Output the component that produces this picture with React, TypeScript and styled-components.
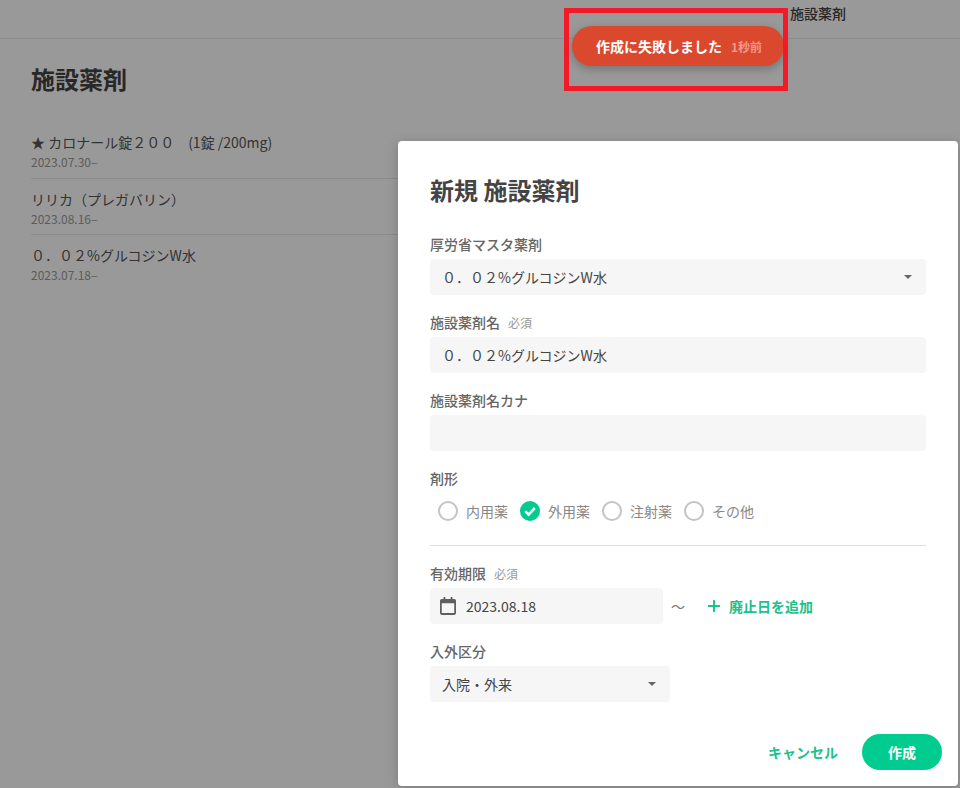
import React from "react";
import styled, { createGlobalStyle } from "styled-components";
import { Plus } from "lucide-react";

const Global = createGlobalStyle`
  html, body { margin: 0; padding: 0; background: #fff; }
  body { font-family: "Noto Sans CJK JP", "Noto Sans", sans-serif; color: #333; }
  * { box-sizing: border-box; }
`;

const Page = styled.div`
  position: relative;
  width: 960px;
  height: 788px;
  overflow: hidden;
  background: #fff;
`;
const Header = styled.header`
  height: 39px;
  border-bottom: 1px solid #ececec;
  display: flex;
  justify-content: flex-end;
  padding: 3px 114px 0 0;
  font-size: 14px;
  line-height: 20px;
  font-weight: 500;
  color: #444;
`;
const Main = styled.main`
  padding: 20px 31px 0;
`;
const PageTitle = styled.h1`
  margin: 0 0 23px;
  font-size: 24px;
  line-height: 40px;
  font-weight: 700;
  color: #444;
`;
const MedRow = styled.div`
  height: 56.5px;
  padding-top: 8px;
  border-bottom: 1px solid #e8e8e8;
  &:last-child { border-bottom: 0; }
`;
const MedName = styled.div`
  font-size: 14px;
  line-height: 24px;
  color: #555;
`;
const MedDate = styled.div`
  font-size: 12px;
  line-height: 15px;
  color: #999;
`;
const Overlay = styled.div`
  position: absolute;
  inset: 0;
  background: rgba(0, 0, 0, 0.4);
`;
const Modal = styled.section`
  position: absolute;
  left: 398px;
  top: 141px;
  width: 560px;
  height: 645px;
  background: #fff;
  border-radius: 4px;
  padding: 29px 32px 32px;
  box-shadow: 0 2px 12px rgba(0, 0, 0, 0.2);
`;
const ModalTitle = styled.h2`
  margin: 0 0 27px;
  font-size: 24px;
  line-height: 40px;
  font-weight: 700;
  color: #444;
`;
const Field = styled.div`
  margin-bottom: 20px;
`;
const Label = styled.div`
  display: flex;
  align-items: baseline;
  gap: 8px;
  height: 22px;
  font-size: 14px;
  line-height: 14px;
  font-weight: 500;
  color: #666;
`;
const Required = styled.span`
  font-size: 12px;
  font-weight: 400;
  color: #999;
`;
const Control = styled.div<{ $width?: number }>`
  display: flex;
  align-items: center;
  justify-content: space-between;
  width: ${(p) => (p.$width ? `${p.$width}px` : "100%")};
  height: 36px;
  padding: 0 14px 0 12px;
  background: #f6f6f6;
  border-radius: 4px;
  font-size: 14px;
  color: #444;
`;
const Caret = styled.span`
  width: 0;
  height: 0;
  border-left: 4.5px solid transparent;
  border-right: 4.5px solid transparent;
  border-top: 4.5px solid #666;
`;
const Radios = styled.div`
  display: flex;
  align-items: center;
  height: 36px;
  padding-left: 8px;
  gap: 12px;
`;
const RadioItem = styled.label`
  display: flex;
  align-items: center;
  gap: 8px;
  font-size: 14px;
  color: #888;
`;
const RadioCircle = styled.span`
  width: 20px;
  height: 20px;
  border-radius: 50%;
  border: 2px solid #c4c4c4;
  background: #fff;
`;
const CheckedCircle = styled.svg`
  width: 20px;
  height: 20px;
  display: block;
`;
const Divider = styled.hr`
  margin: 16px 0 20px;
  border: 0;
  border-top: 1px solid #e0e0e0;
`;
const DateRow = styled.div`
  display: flex;
  align-items: center;
`;
const DateValue = styled.div`
  display: flex;
  align-items: center;
  gap: 10px;
  margin-left: -2px;
`;
const Tilde = styled.span`
  margin: 0 20px 0 8px;
  font-size: 14px;
  color: #777;
`;
const AddLink = styled.span`
  display: flex;
  align-items: center;
  gap: 6px;
  font-size: 14px;
  font-weight: 700;
  color: #1cc18d;
`;
const Footer = styled.div`
  position: absolute;
  right: 16px;
  bottom: 16px;
  display: flex;
  align-items: center;
  gap: 24px;
`;
const CancelButton = styled.button`
  border: 0;
  padding: 0;
  background: none;
  font: inherit;
  font-size: 14px;
  font-weight: 700;
  color: #1cc18d;
`;
const CreateButton = styled.button`
  width: 80px;
  height: 36px;
  border: 0;
  border-radius: 18px;
  background: #00cc90;
  font: inherit;
  font-size: 14px;
  font-weight: 700;
  color: #fff;
`;
const Toast = styled.div`
  position: absolute;
  left: 572px;
  top: 26px;
  width: 212px;
  height: 40px;
  border-radius: 20px;
  background: #da482e;
  box-shadow: 0 3px 10px rgba(0, 0, 0, 0.25);
  display: flex;
  align-items: center;
  padding-left: 24px;
  gap: 9px;
  font-size: 14px;
  font-weight: 700;
  color: #fff;
`;
const ToastTime = styled.span`
  font-size: 12px;
  font-weight: 700;
  color: #f0988a;
`;
const Highlight = styled.div`
  position: absolute;
  left: 564px;
  top: 8px;
  width: 224px;
  height: 83px;
  border: 5px solid #f21a26;
`;

const meds = [
  { name: "★ カロナール錠２００　(1錠 /200mg)", date: "2023.07.30–" },
  { name: "リリカ（プレガバリン）", date: "2023.08.16–" },
  { name: "０．０２%グルコジンW水", date: "2023.07.18–" },
];
const forms = ["内用薬", "外用薬", "注射薬", "その他"];

export default function App() {
  return (
    <Page>
      <Global />
      <Header>施設薬剤</Header>
      <Main>
        <PageTitle>施設薬剤</PageTitle>
        {meds.map((m) => (
          <MedRow key={m.date}>
            <MedName>{m.name}</MedName>
            <MedDate>{m.date}</MedDate>
          </MedRow>
        ))}
      </Main>
      <Overlay />
      <Modal>
        <ModalTitle>新規 施設薬剤</ModalTitle>
        <Field>
          <Label>厚労省マスタ薬剤</Label>
          <Control>
            ０．０２%グルコジンW水
            <Caret />
          </Control>
        </Field>
        <Field>
          <Label>
            施設薬剤名<Required>必須</Required>
          </Label>
          <Control>０．０２%グルコジンW水</Control>
        </Field>
        <Field>
          <Label>施設薬剤名カナ</Label>
          <Control />
        </Field>
        <Label>剤形</Label>
        <Radios>
          {forms.map((f) => (
            <RadioItem key={f}>
              {f === "外用薬" ? (
                <CheckedCircle viewBox="0 0 20 20">
                  <circle cx="10" cy="10" r="10" fill="#00cc90" />
                  <path d="M5.2 10.2l3.4 3.4 6.2-6.6" fill="none" stroke="#fff" strokeWidth="2.6" />
                </CheckedCircle>
              ) : (
                <RadioCircle />
              )}
              {f}
            </RadioItem>
          ))}
        </Radios>
        <Divider />
        <Field>
          <Label>
            有効期限<Required>必須</Required>
          </Label>
          <DateRow>
            <Control $width={233}>
              <DateValue>
                <svg width="16" height="18" viewBox="0 0 18 20">
                  <path
                    d="M4 0h2v2h6V0h2v2h2a2 2 0 0 1 2 2v14a2 2 0 0 1-2 2H2a2 2 0 0 1-2-2V4a2 2 0 0 1 2-2h2V0zM2 7v11h14V7H2z"
                    fill="#5f5f5f"
                  />
                </svg>
                2023.08.18
              </DateValue>
            </Control>
            <Tilde>〜</Tilde>
            <AddLink>
              <Plus size={18} strokeWidth={2.6} />
              廃止日を追加
            </AddLink>
          </DateRow>
        </Field>
        <Field>
          <Label>入外区分</Label>
          <Control $width={240}>
            入院・外来
            <Caret />
          </Control>
        </Field>
        <Footer>
          <CancelButton>キャンセル</CancelButton>
          <CreateButton>作成</CreateButton>
        </Footer>
      </Modal>
      <Toast>
        作成に失敗しました<ToastTime>1秒前</ToastTime>
      </Toast>
      <Highlight />
    </Page>
  );
}
